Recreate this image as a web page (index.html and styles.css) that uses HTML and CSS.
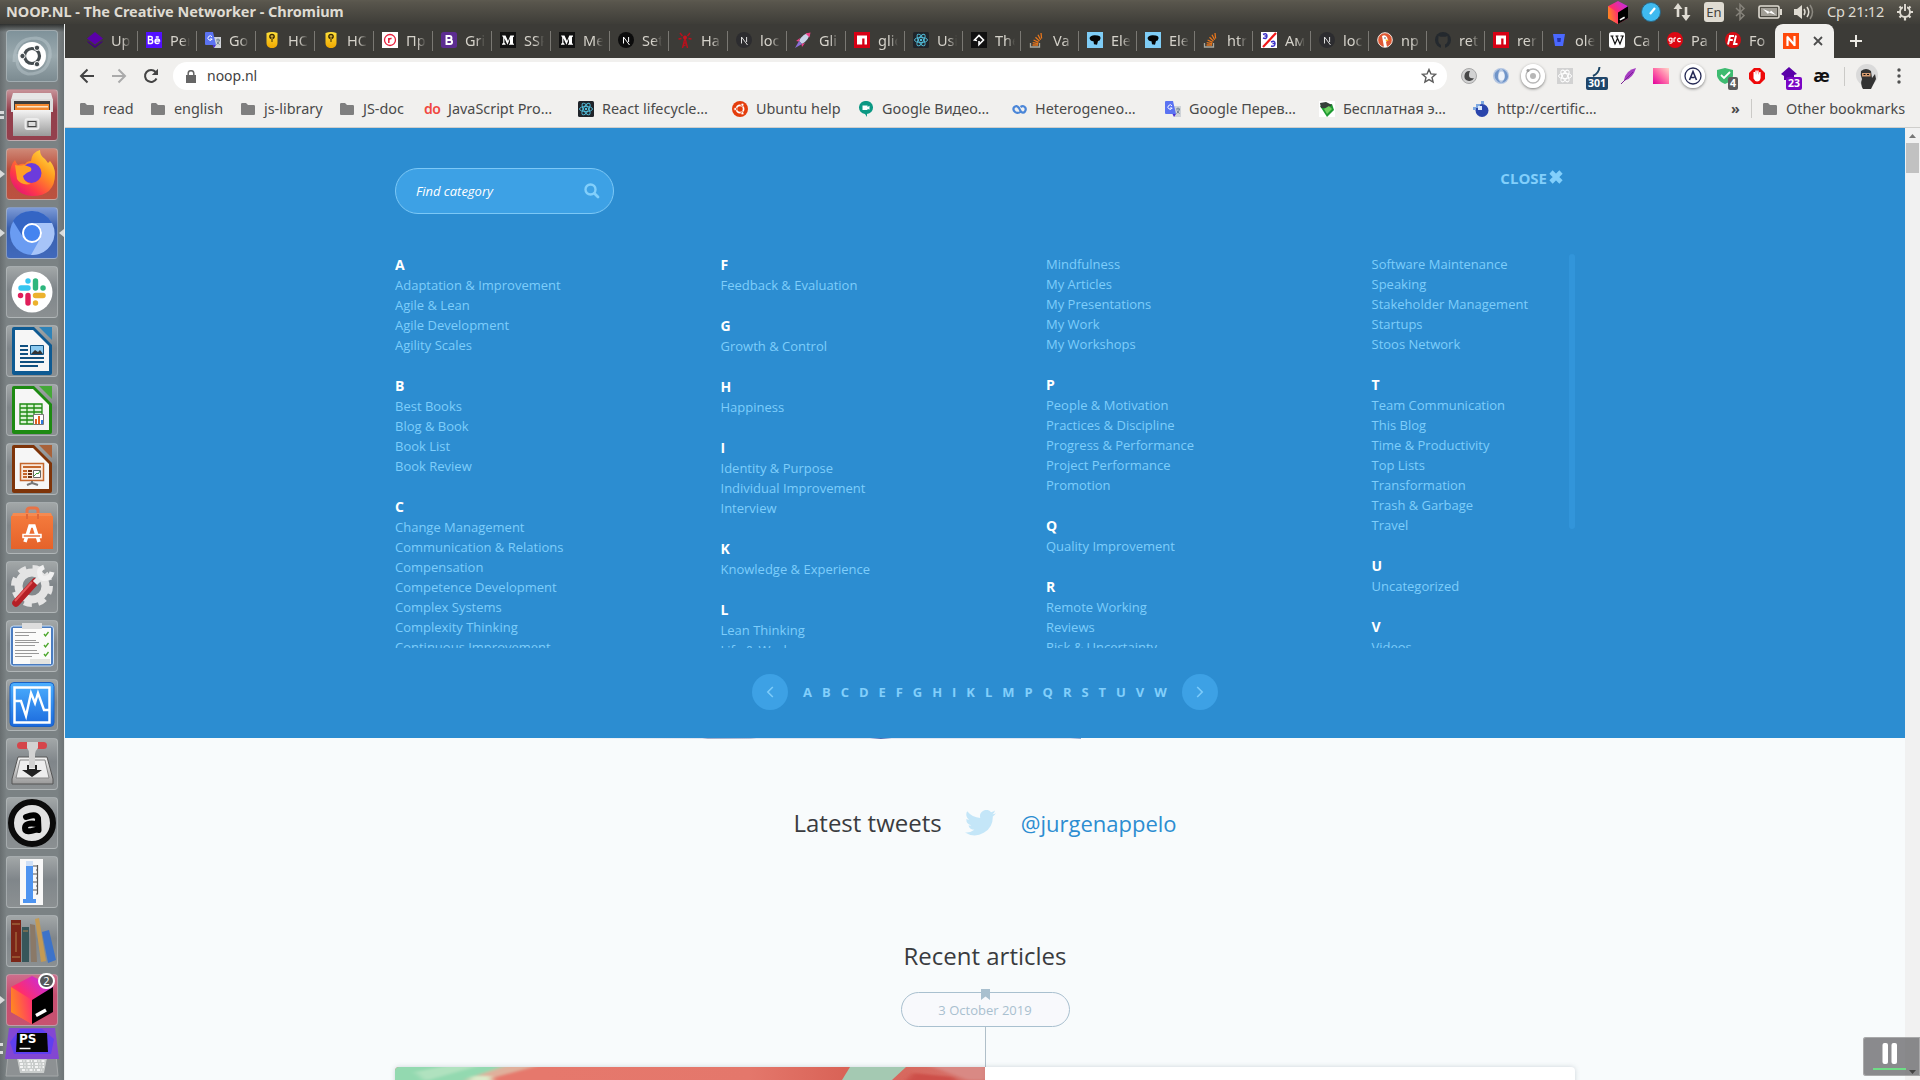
FILE: index.html
```html
<!DOCTYPE html>
<html lang="en">
<head>
<meta charset="utf-8">
<title>NOOP.NL - The Creative Networker</title>
<link rel="stylesheet" href="styles.css">
</head>
<body>
<svg class="defs" width="0" height="0" aria-hidden="true">
  <defs>
    <linearGradient id="g-yellow" x2="0" y2="1"><stop stop-color="#ffe13a"/><stop offset="1" stop-color="#f0a800"/></linearGradient>
    <linearGradient id="g-box" x1="0" y1="1" x2="1" y2="0"><stop stop-color="#ff9419"/><stop offset=".45" stop-color="#ff2d6c"/><stop offset="1" stop-color="#b52cff"/></linearGradient>
    <linearGradient id="g-boxl" x1="0" y1=".6" x2="1" y2=".3"><stop stop-color="#ff8a1e"/><stop offset="1" stop-color="#ff2f70"/></linearGradient>
    <linearGradient id="g-fox" x1="1" y1="0" x2="0.2" y2="1"><stop stop-color="#fff14f"/><stop offset=".4" stop-color="#ff9a1f"/><stop offset=".75" stop-color="#ff3b47"/><stop offset="1" stop-color="#e3107a"/></linearGradient>
    <linearGradient id="g-steel" x2="0" y2="1"><stop stop-color="#f4f4f4"/><stop offset="1" stop-color="#9a9a9a"/></linearGradient>
    <linearGradient id="g-bag" x2="0" y2="1"><stop stop-color="#f47a3c"/><stop offset="1" stop-color="#e5622a"/></linearGradient>
    <linearGradient id="g-mon" x2="0" y2="1"><stop stop-color="#4cb0ff"/><stop offset="1" stop-color="#1a68dc"/></linearGradient>
    <linearGradient id="g-pink" x1="1" y1="0" x2="0" y2="1"><stop stop-color="#ffd5c8"/><stop offset=".5" stop-color="#ff6aa6"/><stop offset="1" stop-color="#e2009c"/></linearGradient>
    <linearGradient id="g-photo"><stop offset=".25" stop-color="#e6786c"/><stop offset=".6" stop-color="#e4776b"/><stop offset=".76" stop-color="#d96357"/><stop offset="1" stop-color="#d4716a"/></linearGradient>
    <filter id="soft" x="-5%" y="-40%" width="110%" height="180%"><feGaussianBlur stdDeviation="3 1"/></filter>
  </defs>
  <symbol id="folder" viewBox="0 0 16 16"><path fill="#7f7f7f" d="M1 3.200Q1 2 2.200 2H6l2 2h5.800q1.200 0 1.200 1.200V13q0 1-1 1H2q-1 0-1-1z"/></symbol>
  <symbol id="gem" viewBox="0 0 16 16"><path fill="#5a00a8" d="M8 0l8 6.500-8 6-8-6z"/><path fill="#430080" d="M0 8.500l8 5.500 8-5.500-1 2-7 5.500-7-5.500z"/></symbol>
  <symbol id="be" viewBox="0 0 16 16"><path fill="#5310ff" d="M0 0h16v16H0z"/><path fill="none" stroke="#fff" stroke-width="1.500" d="M2.500 4.500h2.300q1.500 0 1.500 1.600T4.800 7.700H2.500zm0 3.200H5q1.700 0 1.700 1.900T5 11.500H2.500zM9 9h4.500q0-2-2.200-2T9 9.200q0 2.300 2.300 2.300 1.500 0 2-1M9.800 5h3"/></symbol>
  <symbol id="translate" viewBox="0 0 16 16"><path fill="#cfd3d8" d="M7 5h9v11H9z"/><path fill="#5b73f2" d="M1 0h7l3 13H1q-1 0-1-1V1q0-1 1-1z"/><path fill="#4a2fd0" d="M7.500 13H11l-2 3z"/><path fill="none" stroke="#fff" d="M7 4.800A2.200 2.200 0 1 0 7.200 7H5"/><path fill="none" stroke="#6d8292" d="M11 8h4m-2-1.500V8m1.500 0q-.5 3-3 4.500m.5-3q.8 2 2.500 3"/></symbol>
  <symbol id="shieldy" viewBox="0 0 16 16"><path fill="url(#g-yellow)" d="M2.500 1q5.500-2 11 0v10q0 4-4 5h-3q-4-1-4-5z"/><circle cx="8" cy="4.500" r="2.800" fill="#3a2b00"/><path stroke="#e8c040" d="M8 3v4M6.500 4.200h3"/><path stroke="#3a2b00" d="M8 7v3"/></symbol>
  <symbol id="rr" viewBox="0 0 16 16"><path fill="#fff" d="M0 0h16v16H0z"/><circle cx="8" cy="8" r="5.500" fill="none" stroke="#e8203c" stroke-width="1.300"/><path fill="none" stroke="#e8203c" stroke-width="1.500" d="M6.800 11V6m0 2q.5-1.800 2.800-1.500"/></symbol>
  <symbol id="boot" viewBox="0 0 16 16"><rect width="16" height="16" rx="2.500" fill="#5d2d91"/><path fill="none" stroke="#fff" stroke-width="1.900" d="M5.500 4h3q2 0 2 2t-2 2h-3zm0 4H9q2.100 0 2.100 2T9 12H5.500z"/></symbol>
  <symbol id="medium" viewBox="0 0 16 16"><path fill="#111" d="M0 0h16v16H0z"/><path fill="#fff" d="M2 3.500h3.500L8 9l2.300-5.500H14v1l-1 .7v6l1 .8v.7H9v-.7l1-.8V6.500L7.500 12.700 4.400 6.300v4.500l1.200 1.300v.6H2v-.6l1.200-1.300V5.500z"/></symbol>
  <symbol id="next" viewBox="0 0 16 16"><circle cx="8" cy="8" r="8" fill="#0c0c0c"/><path fill="none" stroke="#fff" d="M5.500 11.500V5l6 8M10.600 5v5"/></symbol>
  <symbol id="nextdim" viewBox="0 0 16 16"><circle cx="8" cy="8" r="8" fill="#2c2c2f"/><path fill="none" stroke="#ddd" d="M5.500 11.500V5l6 8M10.600 5v5"/></symbol>
  <symbol id="tower" viewBox="0 0 16 16"><path fill="none" stroke="#b8101c" stroke-width="1.400" d="M8 6L5.500 16M8 6l2.500 10M6.800 11h2.500M6.500 14l3.500-2M5.500 4L3 1M4.500 6.500l-3 .5m9-3L13 1m-1.500 5.500l3 .5"/><circle cx="8" cy="5.500" r="2" fill="#c5121e"/></symbol>
  <symbol id="rocket" viewBox="0 0 16 16"><path fill="#c9d3e8" d="M15 1q-7 0-11 8l3 3q7-4 8-11z"/><path fill="#ee3f86" d="M15.500.5l-5 1 4 4zM5 6L1 9l3 .5zM10 11l-3 4-.5-3z"/><path fill="#8a6fd8" d="M4 9L0 16l7-4z"/></symbol>
  <symbol id="npm" viewBox="0 0 16 16"><path fill="#d60014" d="M0 0h16v16H0z"/><path fill="#fff" d="M3 3.500h10v9h-2.500v-6h-2.300v6H3z"/></symbol>
  <symbol id="react" viewBox="0 0 16 16"><rect width="16" height="16" rx="1.500" fill="#20242a"/><g fill="none" stroke="#53c1de" stroke-width=".9"><ellipse cx="8" cy="8" rx="6.500" ry="2.600"/><ellipse cx="8" cy="8" rx="6.500" ry="2.600" transform="rotate(60 8 8)"/><ellipse cx="8" cy="8" rx="6.500" ry="2.600" transform="rotate(120 8 8)"/></g><circle cx="8" cy="8" r="1.200" fill="#53c1de"/></symbol>
  <symbol id="diam" viewBox="0 0 16 16"><path fill="#111" d="M0 0h16v16H0z"/><path fill="none" stroke="#fff" stroke-width="1.600" d="M6 8.500L3.500 8 8 3.500 12.500 8 8 12.500V9"/></symbol>
  <symbol id="so" viewBox="0 0 16 16"><path fill="none" stroke="#a9a9a0" stroke-width="1.300" d="M1.500 11v4h9v-4"/><path stroke="#e8761c" stroke-width="1.300" d="M3.500 13h5.500M3.700 10.700l5.500.9M4.600 8l5 2.300M6.500 5.200l4 3.900M9 2.700l2.600 5M12 1l.6 5.500"/></symbol>
  <symbol id="ele" viewBox="0 0 16 16"><path fill="#7fcdf6" d="M0 0h16v16H0z"/><path fill="#050505" d="M2.500 6Q4 3 8 3.300q6 0 5.500 3.200Q13 9 11 9l-1 3.800-3-.6-.5-3q-3 .3-4-3.200z"/></symbol>
  <symbol id="ee" viewBox="0 0 16 16"><path fill="#fff" d="M0 0h16v16H0z"/><path fill="none" stroke="#3b2fc6" stroke-width="1.400" d="M2 2.500q4-2 4 1.500T2 6m1.500-2H6m4 6q4-2 4 1.500T10 14m1.500-2.500H14"/><path stroke="#f01818" stroke-width="2.200" d="M15 1L2 15"/></symbol>
  <symbol id="duck" viewBox="0 0 16 16"><circle cx="8" cy="8" r="7.300" fill="#de5833" stroke="#f5e6df"/><path fill="#fff" d="M5 4q3-2 5 1l1 3-2 2 1 5H7z"/><path fill="#f8b91b" d="M8.500 7.500l4 .4-3.500 1.600z"/><circle cx="8" cy="6" r=".7" fill="#234"/></symbol>
  <symbol id="git" viewBox="0 0 16 16"><circle cx="8" cy="8" r="8" fill="#24292e"/><path fill="#3c3b37" d="M6 16v-3Q3 11 3.300 7.500L3.500 4l2 .7h5l2-.7.200 3.500Q13 11 10 12.500V16z"/></symbol>
  <symbol id="bucket" viewBox="0 0 16 16"><path fill="#4a68ff" d="M2 2h12l-2 12H4z"/><path fill="#2332a8" d="M6 6h4l-.5 4h-3z"/></symbol>
  <symbol id="wiki" viewBox="0 0 16 16"><rect width="16" height="16" rx="2.500" fill="#fff"/><path fill="none" stroke="#111" stroke-width="1.200" d="M1.500 4h3M2.800 4L6 12l2.500-5.500M6.500 4h3M7.500 4l3.500 8L14 4M11.500 4h3.300"/></symbol>
  <symbol id="grc" viewBox="0 0 16 16"><circle cx="8" cy="8" r="8" fill="#dd0712"/><path fill="none" stroke="#fff" stroke-width="1.200" d="M5 6.300q-3-.8-3 1.500t3 1V6v4.500q-.5 1-2.500.6M7 10V6.500q.5-.8 2-.5m4.700.6q-3-.9-3 1.400t3 1.400"/></symbol>
  <symbol id="fl" viewBox="0 0 16 16"><circle cx="8" cy="8" r="8" fill="#d40a12"/><path fill="none" stroke="#fff" stroke-width="1.900" d="M3 12.500L5 4h4M4.300 8h3.500M11 3.500l-2 8.500h3.500"/></symbol>
  <symbol id="nn" viewBox="0 0 16 16"><path fill="#ff4a0c" d="M0 0h16v16H0z"/><path fill="none" stroke="#fff" stroke-width="2.200" d="M4.500 13V3.500M4 3.500l8 9M11.500 13V3"/></symbol>
  <symbol id="ubuntu" viewBox="0 0 16 16"><circle cx="8" cy="8" r="8" fill="#e43d0c"/><circle cx="8" cy="8" r="3.600" fill="none" stroke="#fff" stroke-width="1.700"/><g fill="#fff" stroke="#e43d0c" stroke-width=".7"><circle cx="3.200" cy="8" r="1.500"/><circle cx="10.400" cy="3.800" r="1.500"/><circle cx="10.400" cy="12.200" r="1.500"/></g></symbol>
  <symbol id="hang" viewBox="0 0 16 16"><path fill="#0b9883" d="M8 0a6.500 6.500 0 0 1 1 13v3l-2-3A6.500 6.500 0 0 1 8 0z"/><path fill="#fff" d="M4.500 4.500h5V6l2-1.200v4L9.500 7.700V9h-5z"/></symbol>
  <symbol id="inf" viewBox="0 0 16 16"><path fill="none" stroke="#4b86d8" stroke-width="2.200" d="M10 10.500Q7 13 4.300 11.200q-3-2.200-1.200-5Q5.500 3.500 8 7l1.500 3q2.500 3 4.500.5 1.800-3-.7-4.900Q11.500 4.500 9.500 6"/></symbol>
  <symbol id="greenb" viewBox="0 0 16 16"><path fill="#fff" d="M0 0h16v16H0z"/><path fill="#1e9a32" d="M1 5l7 11 7-7-2-6z"/><path fill="#36403a" d="M1 2l6-1 6 3-4 3-7 0z"/><path fill="#6ed060" d="M5 8l5-3 3 3-5 5z"/></symbol>
  <symbol id="cert" viewBox="0 0 16 16"><circle cx="9" cy="9.500" r="6.500" fill="#2a45ac"/><path fill="#7da7e0" d="M3 3h4v4H3zM8 0h3v3H8zM0 6h3v3H0z"/><path fill="#dbe8fa" d="M5 5h4v4H5z"/></symbol>
  <symbol id="box" viewBox="0 0 42 48"><path fill="url(#g-box)" d="M21 0l21 11v25L21 48 0 36V11z"/><path fill="url(#g-boxl)" d="M0 11l21 13v24L0 36z"/><path fill="#000" d="M21 24l21-13v25L21 48z"/><path stroke="#fff" stroke-width="3.500" d="M25 39.500l10-5.500"/></symbol>
</svg>

<header class="panel">
  <span class="panel-title">NOOP.NL - The Creative Networker - Chromium</span>
  <div class="indicators">
    <svg class="ind i-box" width="20" height="23"><use href="#box"/></svg>
    <svg class="ind i-clock" width="22" height="22" viewBox="0 0 22 22"><circle cx="11" cy="11" r="9.500" fill="#3fbaf0" stroke="#2b6480"/><path stroke="#fff" stroke-width="2.200" d="M10 13l5-6"/></svg>
    <svg class="ind i-net" width="20" height="18" viewBox="0 0 20 18"><path fill="none" stroke="#dfdbd2" stroke-width="2.600" d="M6 14V4M14 4v10"/><path fill="#dfdbd2" d="M1.500 6L6 0l4.500 6zM9.500 12h9L14 18z"/></svg>
    <span class="ind lang">En</span>
    <svg class="ind i-bt" width="12" height="18" viewBox="0 0 12 18"><path fill="none" stroke="#86837b" stroke-width="1.500" d="M2 5l8 7.500L6 16.500v-15L10 5.500 2 13"/></svg>
    <svg class="ind i-bat" width="24" height="14" viewBox="0 0 24 14"><rect x="1" y="1" width="20" height="12" rx="1.500" fill="none" stroke="#dfdbd2" stroke-width="1.600"/><path fill="#a19e96" d="M3 3h16v8H3z"/><path fill="#fff" d="M5 4l7 3 1-1.500L18 10l-7-2.500L10 9z"/><path stroke="#dfdbd2" stroke-width="2" d="M23 4v6"/></svg>
    <svg class="ind i-vol" width="22" height="18" viewBox="0 0 22 18"><path fill="#dfdbd2" d="M1 6h3l5-4v14l-5-4H1z"/><path fill="none" stroke="#dfdbd2" stroke-width="1.500" d="M11 6q2 3 0 6M14 4q3.500 5 0 10"/><path fill="none" stroke="#8c8981" stroke-width="1.500" d="M17 2q5 7 0 14"/></svg>
    <span class="clock">Ср 21:12</span>
    <svg class="ind i-gear" width="18" height="18" viewBox="0 0 18 18"><circle cx="9" cy="9" r="5" fill="none" stroke="#dfdbd2" stroke-width="1.900"/><g stroke="#dfdbd2" stroke-width="2.200"><path d="M9 14v3.500M1 9h3M14 9h3M3.500 14.500l2-2M14.500 14.500l-2-2M3.500 3.500l2 2M14.500 3.500l-2 2"/></g><path stroke="#4a4843" stroke-width="4" d="M9 1v7"/><path stroke="#dfdbd2" stroke-width="1.900" d="M9 1v7"/></svg>
  </div>
</header>

<div class="desktop">
<nav class="dock">
  <div class="tile dash"><svg viewBox="0 0 52 52"><path fill="none" stroke="#c6d2d6" stroke-opacity=".4" stroke-width="3" d="M8 32Q8 8 30 8q16 2 14 20M44 22q0 22-22 22Q8 40 12 24"/><circle cx="26" cy="26" r="14" fill="#fff"/><circle cx="26" cy="26" r="7.500" fill="none" stroke="#454c50" stroke-width="3.200"/><g fill="#454c50" stroke="#fff"><circle cx="16.500" cy="26" r="2.700"/><circle cx="31" cy="17.800" r="2.700"/><circle cx="31" cy="34.200" r="2.700"/></g></svg></div>
  <div class="tile red"><i class="pip double"></i><svg viewBox="0 0 52 52"><path fill="#e6e6e6" d="M7 4h38l2 7H5z"/><path fill="#dcdcdc" d="M5 10h42v13H5z"/><path fill="#3d3d3d" d="M8 12h36v10H8z"/><path fill="#f2882f" d="M9 15h34v6H9z"/><path fill="#fbe3c4" d="M11 17h31v1.500H11z"/><path fill="url(#g-steel)" d="M7 21h38v26H7z"/><rect x="19.500" y="30" width="13" height="10" rx="2" fill="none" stroke="#ececec" stroke-width="2"/><rect x="22" y="32.500" width="8" height="5" fill="#ddd" stroke="#444"/></svg></div>
  <div class="tile fire"><i class="pip"></i><svg viewBox="0 0 52 52"><path fill="url(#g-fox)" d="M26 48A22.500 22.500 0 0 1 5 19q1-4 4-7 1 3 3 5 4-2 7-1 2-3 6-3Q26 4 34 2q0 6 5 9l3 4 2-2q5 6 5 13 0 22-23 22z"/><circle cx="25.500" cy="25" r="10" fill="#6c3bdc"/><path fill="#ffa024" d="M9 17q5 1 9 0l6 2q2 1 1 4-4 1-8 5 1 6 8 8-10 2-14-5z"/></svg></div>
  <div class="tile blue"><i class="pip"></i><i class="pip right"></i><svg viewBox="0 0 52 52"><circle cx="26" cy="26" r="22" fill="#6a9cf2"/><path fill="#3465c4" d="M26 4a22 22 0 0 1 20 12H26a10 10 0 0 0-9 14L7 14A22 22 0 0 1 26 4z"/><path fill="#a7c4f8" d="M46 16H26a10 10 0 0 1 8 16L25 48A22 22 0 0 0 46 16z"/><circle cx="26" cy="26" r="9" fill="#4484f0" stroke="#fff" stroke-width="2"/></svg></div>
  <div class="tile"><svg viewBox="0 0 52 52"><circle cx="26" cy="26" r="20.500" fill="#fff"/><g stroke-width="5.400" stroke-linecap="round"><path stroke="#36c5f0" d="M15 22h7m0-7v.1"/><path stroke="#2eb67d" d="M29.500 15v7m7.500 0h.1"/><path stroke="#ecb22e" d="M29.500 29.500h7.500m-7.500 7.500v.1"/><path stroke="#e01e5a" d="M22 29.500V37m-7.500-7.500h.1"/></g></svg></div>
  <div class="tile"><svg viewBox="0 0 52 52"><path fill="#0e5a92" d="M8 2h20l18 18v28q0 2-2 2H8q-2 0-2-2V4q0-2 2-2z"/><path fill="#f6f6f6" d="M9 5h18l16 16v25H9z"/><path fill="#2f83b8" d="M33 2h13v13z"/><path stroke="#105080" stroke-width="2" d="M14 21h8M14 25h8M14 29h8M14 33h24M14 37h24M14 41h18"/><path fill="#8ccaf0" stroke="#105080" d="M24.500 20.500h13v9h-13z"/><path fill="#333" d="M25 29l4-4 3 2 2-2 3 4z"/></svg></div>
  <div class="tile"><svg viewBox="0 0 52 52"><path fill="#1d8a12" d="M8 2h20l18 18v28q0 2-2 2H8q-2 0-2-2V4q0-2 2-2z"/><path fill="#f6f6f6" d="M9 5h18l16 16v25H9z"/><path fill="#45a838" d="M33 2h13v13z"/><path fill="#d9f2d2" stroke="#1d8a12" stroke-width="1.300" d="M14 20h22v20H14zM14 24h22M14 28h22M14 32h22M14 36h22M21 20v20M28 20v20"/><path fill="#fff" stroke="#777" d="M27.500 30.500h10v10h-10z"/><path fill="#e06020" d="M29 35h2v5h-2zM32 32h2v8h-2z"/><path fill="#2d7be0" d="M35 36h2v4h-2z"/></svg></div>
  <div class="tile"><svg viewBox="0 0 52 52"><path fill="#7e3409" d="M8 2h20l18 18v28q0 2-2 2H8q-2 0-2-2V4q0-2 2-2z"/><path fill="#f6f6f6" d="M9 5h18l16 16v25H9z"/><path fill="#a8623a" d="M33 2h13v13z"/><path fill="#fae9dc" stroke="#c4662c" stroke-width="1.500" d="M14.500 20.500h23v17h-23z"/><path stroke="#c4662c" stroke-width="2" d="M17 24h18M17 28h4M17 31h4M17 34h4"/><path stroke="#6b3010" stroke-width="2" d="M22 28h4M22 31h4M22 34h4"/><path fill="#fff" stroke="#666" d="M27.500 27.500h7v7h-7z"/><path fill="none" stroke="#3a9a3a" d="M28 33l3-3 1 1 2-3"/><path fill="none" stroke="#777" stroke-width="2" d="M26 38v2l-5 2m5-2l6 2"/></svg></div>
  <div class="tile"><svg viewBox="0 0 52 52"><path fill="none" stroke="#e87346" stroke-width="3" d="M21 18V9q0-3 3-3h5q3 0 3 3v9"/><path fill="#f58a50" d="M7 11h38l2 5H5z"/><path fill="url(#g-bag)" d="M5 14h42v33H5z"/><path fill="none" stroke="#fff" stroke-width="3.500" d="M19 40l5-16h4l5 16"/><path fill="#e8703c" stroke="#fff" stroke-width="1.500" d="M17 32.500h18v3H17z"/><path fill="none" stroke="#e06838" stroke-width="2" d="M21 17v-5M32 17v-5"/></svg></div>
  <div class="tile"><svg viewBox="0 0 52 52"><circle cx="26" cy="25" r="13.500" fill="none" stroke="#e4e4e4" stroke-width="8"/><circle cx="26" cy="25" r="18.500" fill="none" stroke="#e4e4e4" stroke-width="5" stroke-dasharray="8 6.530"/><path stroke="#b52026" stroke-width="7.500" stroke-linecap="round" d="M10 42l19-21"/><path stroke="#e2585a" stroke-width="2" d="M9 40l17-19"/><path stroke="#e8e8e8" stroke-width="6" d="M29 22l7-7"/><path fill="none" stroke="#f0f0f0" stroke-width="5" d="M38 6q-6 2-4 8t9 2q2-1 3-5"/></svg></div>
  <div class="tile"><svg viewBox="0 0 52 52"><rect x="4.500" y="6" width="43" height="40" rx="3" fill="#4a7cc0" stroke="#c4dcf6"/><path fill="#fbfbfa" d="M7 8h38v36H7z"/><path fill="#ddd" d="M16 3h20v6H16z"/><path stroke="#999" d="M9 12.500h21M9 15.500h14M9 20.500h21M9 22.500h24M9 25.500h20M9 30.500h22M9 33.500h24M9 36.500h17"/><path fill="none" stroke="#4aa62a" stroke-width="1.300" d="M38 14l1.500 2 3-4M38 25l1.500 2 3-4M38 34l1.500 2 3-4"/><path fill="#e3e3e0" d="M24 39h20v5H24z"/></svg></div>
  <div class="tile"><svg viewBox="0 0 52 52"><rect x="4" y="3.500" width="44" height="44" rx="4" fill="url(#g-mon)" stroke="#1b60c2"/><path fill="none" stroke="#fff" stroke-width="2.500" d="M8.500 8.500h35v35h-35z"/><path fill="none" stroke="#fff" stroke-width="2.400" d="M9 22h6l5 15 5-23 4 10 3-10 6 17h5"/></svg></div>
  <div class="tile"><svg viewBox="0 0 52 52"><path fill="url(#g-steel)" stroke="#555" d="M12 19h29l6 22v5H6v-5z"/><path fill="#eee" stroke="#888" d="M14 22h25l4 18H10z"/><rect x="11" y="4" width="30" height="7" rx="3.500" fill="#d5454a"/><path fill="#d2d2d2" d="M21 4h11v6q-3 3-3 6v14h-6V16q0-4-2-6z"/><path fill="#222" d="M21 27h2v4h6v-4h2v5h5L26 39l-10-7h5z"/></svg></div>
  <div class="tile"><svg viewBox="0 0 52 52"><circle cx="26" cy="26" r="21" fill="#e2e2e2" stroke="#0b0b0b" stroke-width="6"/><path fill="none" stroke="#000" stroke-width="6" stroke-linecap="round" stroke-linejoin="round" d="M20 20q10-4 12 1l.5 12M31 27q-12-2-12 4t13 1"/></svg></div>
  <div class="tile"><svg viewBox="0 0 52 52"><path fill="#f8f8f8" d="M14 3h23v46H14z"/><path stroke="#555" stroke-width="1.200" d="M27 10h5M30 14h2M27 18h5M30 22h2M27 26h5M30 30h2M27 34h5M30 38h2M31.500 9v29"/><path fill="#cfe0f6" d="M20 5h7v6h-7z"/><path fill="#4e94f0" d="M20 10h7v33h3v4H17v-4h3z"/></svg></div>
  <div class="tile"><svg viewBox="0 0 52 52"><path fill="#7b2517" d="M5 5h10v42H5z"/><path fill="#37565a" d="M16 12h7v35h-7z"/><path fill="#8a7968" d="M24 9l5 1 2 37h-6z"/><path fill="#c39a54" d="M29 4l4-1 7 43-5 1z"/><path fill="#3d73c8" d="M36 17l7-2 7 30-8 3z"/><path stroke="#b1804a" d="M6 9h8M6 42h8M10 17v20M17 16h5"/></svg></div>
  <div class="tile pink"><i class="pip"></i><svg viewBox="0 0 52 52"><use href="#box" x="5" y="2" width="42" height="48"/></svg><span class="count">2</span></div>
  <div class="folded"><i class="pip triple"></i><svg width="54" height="50" viewBox="0 0 54 50"><path fill="#8d9193" stroke="#a5a8a9" d="M3 28h48l2 20H1z"/><path fill="#c9cccb" d="M12 30h30l-3 15H15z"/><path fill="none" stroke="#f2f2f2" stroke-width="2" stroke-dasharray="3 1.500 1 2" d="M14 33h26M15 36h24M15 39h24M17 42h20"/><path fill="#8347d2" d="M4 0h46l4 31H0z"/><path fill="#5f3ff0" d="M15 1h22l12 10-3 15H9L5 14z"/><path fill="#050505" d="M12 5h30l1 19H11z"/><path stroke="#fff" stroke-width="1.500" d="M14.500 20.500h11"/></svg><b>PS</b></div>
</nav>

<main class="browser">
  <div class="tabs">
    <div class="tab"><svg><use href="#gem"/></svg><span>Up</span></div>
    <div class="tab"><svg><use href="#be"/></svg><span>Per</span></div>
    <div class="tab"><svg><use href="#translate"/></svg><span>Go</span></div>
    <div class="tab"><svg><use href="#shieldy"/></svg><span>НС</span></div>
    <div class="tab"><svg><use href="#shieldy"/></svg><span>НС</span></div>
    <div class="tab"><svg><use href="#rr"/></svg><span>Пр</span></div>
    <div class="tab"><svg><use href="#boot"/></svg><span>Gri</span></div>
    <div class="tab"><svg><use href="#medium"/></svg><span>SSR</span></div>
    <div class="tab"><svg><use href="#medium"/></svg><span>Me</span></div>
    <div class="tab"><svg><use href="#next"/></svg><span>Set</span></div>
    <div class="tab"><svg><use href="#tower"/></svg><span>Ha</span></div>
    <div class="tab"><svg><use href="#nextdim"/></svg><span>loc</span></div>
    <div class="tab"><svg><use href="#rocket"/></svg><span>Gli</span></div>
    <div class="tab"><svg><use href="#npm"/></svg><span>glic</span></div>
    <div class="tab slim"><svg><use href="#react"/></svg><span>Usi</span></div>
    <div class="tab slim"><svg><use href="#diam"/></svg><span>The</span></div>
    <div class="tab slim"><svg><use href="#so"/></svg><span>Va</span></div>
    <div class="tab slim"><svg><use href="#ele"/></svg><span>Ele</span></div>
    <div class="tab slim"><svg><use href="#ele"/></svg><span>Ele</span></div>
    <div class="tab slim"><svg><use href="#so"/></svg><span>htr</span></div>
    <div class="tab slim"><svg><use href="#ee"/></svg><span>Ам</span></div>
    <div class="tab slim"><svg><use href="#nextdim"/></svg><span>loc</span></div>
    <div class="tab slim"><svg><use href="#duck"/></svg><span>np</span></div>
    <div class="tab slim"><svg><use href="#git"/></svg><span>ret</span></div>
    <div class="tab slim"><svg><use href="#npm"/></svg><span>rer</span></div>
    <div class="tab slim"><svg><use href="#bucket"/></svg><span>ole</span></div>
    <div class="tab slim"><svg><use href="#wiki"/></svg><span>Ca</span></div>
    <div class="tab slim"><svg><use href="#grc"/></svg><span>Pa</span></div>
    <div class="tab slim last"><svg><use href="#fl"/></svg><span>Fo</span></div>
    <div class="tab-active"><svg width="16" height="16"><use href="#nn"/></svg><svg width="10" height="10" viewBox="0 0 10 10"><path stroke="#4c4c4c" stroke-width="1.800" d="M1 1l8 8M9 1L1 9"/></svg></div>
    <svg class="newtab" width="14" height="14" viewBox="0 0 14 14"><path stroke="#eceae4" stroke-width="2" d="M7 1v12M1 7h12"/></svg>
  </div>

  <div class="toolbar">
    <div class="nav">
      <svg width="16" height="16" viewBox="0 0 16 16"><path fill="none" stroke="#444" stroke-width="2" d="M15 8H2.500M8.500 1.500L2 8l6.500 6.500"/></svg>
      <svg width="16" height="16" viewBox="0 0 16 16"><path fill="none" stroke="#aaa" stroke-width="2" d="M1 8h12.500M7.500 1.500L14 8l-6.500 6.500"/></svg>
      <svg width="16" height="16" viewBox="0 0 16 16"><path fill="none" stroke="#444" stroke-width="2" d="M13.500 10.500A6 6 0 1 1 12.600 4"/><path fill="#444" d="M15 .8V7H8.800z"/></svg>
    </div>
    <div class="omnibox">
      <svg width="10" height="13" viewBox="0 0 10 13"><path fill="#666" d="M0 5h10v8H0z"/><path fill="none" stroke="#666" stroke-width="1.500" d="M2.200 5V3.500a2.800 2.800 0 0 1 5.600 0V5"/></svg>
      <span>noop.nl</span>
      <svg class="star" width="16" height="16" viewBox="0 0 16 16"><path fill="none" stroke="#5c5c5c" stroke-width="1.400" d="M8 1.500l1.900 4.400 4.700.4-3.600 3.100 1.100 4.700L8 11.600l-4.100 2.500L5 9.400 1.400 6.300l4.700-.4z"/></svg>
    </div>
    <div class="exts">
      <div class="ext"><svg viewBox="0 0 16 16"><circle cx="8" cy="8" r="7.500" fill="#d2d2d2" stroke="#a8a8a8"/><path fill="#474747" d="M9 3a5 5 0 1 0 4 7q-5 1-5-3 0-2 1-4z"/></svg></div>
      <div class="ext"><svg viewBox="0 0 16 16"><circle cx="8" cy="8" r="8" fill="#b4c6e2"/><path fill="#6f94c8" d="M7 1q-7 3-5 9 2 4 6 5-4-4-3-7 0-4 2-7zM9 1q3 3 3 7 0 4-4 7 6-1 7-6 0-6-6-8z"/><ellipse cx="8.500" cy="8" rx="3" ry="4.500" fill="#eef3fa"/></svg></div>
      <div class="ext"><svg class="disc" viewBox="0 0 24 24"><circle cx="12" cy="12" r="12" fill="#fff"/><circle cx="12" cy="12" r="7" fill="none" stroke="#b7b7b7" stroke-width="1.300"/><circle cx="12" cy="12" r="3" fill="#b7b7b7"/><circle cx="7" cy="6.500" r="1.500" fill="#999"/></svg></div>
      <div class="ext"><svg viewBox="0 0 16 16"><path fill="#d2d2d2" d="M0 0h16v16H0z"/><g fill="none" stroke="#fff"><ellipse cx="8" cy="8" rx="6.500" ry="2.600"/><ellipse cx="8" cy="8" rx="6.500" ry="2.600" transform="rotate(60 8 8)"/><ellipse cx="8" cy="8" rx="6.500" ry="2.600" transform="rotate(120 8 8)"/></g></svg></div>
      <div class="ext"><svg viewBox="0 0 16 16"><path fill="none" stroke="#1c4565" stroke-width="2" d="M10.500 -1Q10 5 4 8"/></svg><b class="badge navy">301</b></div>
      <div class="ext"><svg viewBox="0 0 16 16"><path fill="#a63cc2" d="M15 0Q5 2 3 12l1 .5Q12 10 15 0z"/><path stroke="#7b2296" d="M0 16L12 4"/></svg></div>
      <div class="ext"><svg viewBox="0 0 16 16"><path fill="url(#g-pink)" d="M0 0h16v16H0z"/></svg></div>
      <div class="ext"><svg class="disc" viewBox="0 0 24 24"><circle cx="12" cy="12" r="12" fill="#fff"/><circle cx="12" cy="12" r="8" fill="none" stroke="#252a55" stroke-width="1.300"/><path fill="none" stroke="#252a55" stroke-width="1.600" d="M8.500 16L12 7.500l3.500 8.500M10 13.500h3.500"/></svg></div>
      <div class="ext"><svg viewBox="0 0 16 16"><path fill="#3dbb70" d="M8 0l8 2v6q-1 5-8 8-7-3-8-8V2z"/><path fill="none" stroke="#fff" stroke-width="1.800" d="M4 7l3 3 6-6"/></svg><b class="badge grey">4</b></div>
      <div class="ext"><svg viewBox="0 0 16 16"><path fill="#ee0909" d="M5 0h6l5 5v6l-5 5H5l-5-5V5z"/><path fill="#fff" d="M4.500 8V4H6v3l.4-4.500h1.400V7l.5-4.500h1.300L9.700 7l.6-3h1.300v6q-.6 3.500-3.600 3.500-2 0-3.500-3z"/></svg></div>
      <div class="ext"><svg viewBox="0 0 16 16"><path fill="#5a00a8" d="M8-1l8 7-3 1v5H3V8L0 6z"/></svg><b class="badge violet">23</b></div>
      <div class="ext"><b class="ae">æ</b></div>
    </div>
    <i class="rule"></i>
    <svg class="avatar" width="22" height="26" viewBox="0 -2 22 26"><circle cx="11" cy="10" r="11" fill="#dadada"/><path fill="#333" d="M5 6q5-4 10 0l1 7 3-4 1 5-3 6-2 4H7q-3-5-1-10-2-4-1-8z"/><path fill="#d59b70" d="M6 8h8.500v3.500H6z"/><path stroke="#111" d="M7.500 9.500h2M11 9.500h2"/></svg>
    <svg class="menu" width="4" height="16" viewBox="0 0 4 16"><g fill="#505050"><circle cx="2" cy="2" r="1.700"/><circle cx="2" cy="8" r="1.700"/><circle cx="2" cy="14" r="1.700"/></g></svg>
  </div>

  <div class="bookmarks">
    <a style="width:71px"><svg><use href="#folder"/></svg>read</a>
    <a style="width:90px"><svg><use href="#folder"/></svg>english</a>
    <a style="width:99px"><svg><use href="#folder"/></svg>js-library</a>
    <a style="width:85px"><svg><use href="#folder"/></svg>JS-doc</a>
    <a style="width:154px"><b class="do">do</b>JavaScript Pro…</a>
    <a style="width:154px"><svg><use href="#react"/></svg>React lifecycle…</a>
    <a style="width:126px"><svg><use href="#ubuntu"/></svg>Ubuntu help</a>
    <a style="width:153px"><svg><use href="#hang"/></svg>Google Видео…</a>
    <a style="width:154px"><svg><use href="#inf"/></svg>Heterogeneo…</a>
    <a style="width:154px"><svg><use href="#translate"/></svg>Google Перев…</a>
    <a style="width:154px"><svg><use href="#greenb"/></svg>Бесплатная э…</a>
    <a style="width:154px"><svg><use href="#cert"/></svg>http://certific…</a>
    <span class="more">»</span>
    <i class="rule"></i>
    <a class="other"><svg><use href="#folder"/></svg>Other bookmarks</a>
  </div>

  <div class="viewport">
    <div class="page">
      <section class="cats">
        <div class="cats-top">
          <div class="find"><em>Find category</em><svg width="16" height="16" viewBox="0 0 16 16"><circle cx="6.500" cy="6.500" r="5" fill="none" stroke="#82cffb" stroke-width="2.400"/><path stroke="#82cffb" stroke-width="2.800" stroke-linecap="round" d="M10.500 10.500l3.500 3.500"/></svg></div>
          <div class="close"><b>CLOSE</b><svg width="14" height="14" viewBox="0 0 14 14"><path stroke="#82cffb" stroke-width="4.600" d="M2 2l10 10M12 2L2 12"/></svg></div>
        </div>
        <div class="cats-list">
          <div class="col">
            <h3>A</h3><p>Adaptation &amp; Improvement</p><p>Agile &amp; Lean</p><p>Agile Development</p><p>Agility Scales</p>
            <h3>B</h3><p>Best Books</p><p>Blog &amp; Book</p><p>Book List</p><p>Book Review</p>
            <h3>C</h3><p>Change Management</p><p>Communication &amp; Relations</p><p>Compensation</p><p>Competence Development</p><p>Complex Systems</p><p>Complexity Thinking</p><p>Continuous Improvement</p>
          </div>
          <div class="col">
            <h3>F</h3><p>Feedback &amp; Evaluation</p>
            <h3>G</h3><p>Growth &amp; Control</p>
            <h3>H</h3><p>Happiness</p>
            <h3>I</h3><p>Identity &amp; Purpose</p><p>Individual Improvement</p><p>Interview</p>
            <h3>K</h3><p>Knowledge &amp; Experience</p>
            <h3>L</h3><p>Lean Thinking</p><p>Life &amp; Work</p>
          </div>
          <div class="col">
            <p>Mindfulness</p><p>My Articles</p><p>My Presentations</p><p>My Work</p><p>My Workshops</p>
            <h3>P</h3><p>People &amp; Motivation</p><p>Practices &amp; Discipline</p><p>Progress &amp; Performance</p><p>Project Performance</p><p>Promotion</p>
            <h3>Q</h3><p>Quality Improvement</p>
            <h3>R</h3><p>Remote Working</p><p>Reviews</p><p>Risk &amp; Uncertainty</p>
          </div>
          <div class="col">
            <p>Software Maintenance</p><p>Speaking</p><p>Stakeholder Management</p><p>Startups</p><p>Stoos Network</p>
            <h3>T</h3><p>Team Communication</p><p>This Blog</p><p>Time &amp; Productivity</p><p>Top Lists</p><p>Transformation</p><p>Trash &amp; Garbage</p><p>Travel</p>
            <h3>U</h3><p>Uncategorized</p>
            <h3>V</h3><p>Videos</p>
          </div>
          <i class="thumb"></i>
        </div>
        <div class="pager">
          <span class="round"><svg width="8" height="12" viewBox="0 0 8 12"><path fill="none" stroke="#7ccbfa" stroke-width="1.600" d="M6.800 1L1.800 6l5 5"/></svg></span>
          <div class="letters"><b>A</b><b>B</b><b>C</b><b>D</b><b>E</b><b>F</b><b>G</b><b>H</b><b>I</b><b>K</b><b>L</b><b>M</b><b>P</b><b>Q</b><b>R</b><b>S</b><b>T</b><b>U</b><b>V</b><b>W</b></div>
          <span class="round"><svg width="8" height="12" viewBox="0 0 8 12"><path fill="none" stroke="#7ccbfa" stroke-width="1.600" d="M1.200 1l5 5-5 5"/></svg></span>
        </div>
      </section>
      <i class="sliver"></i>
      <section class="tweets">
        <h2>Latest tweets</h2>
        <svg width="31" height="26" viewBox="0 0 24 20"><path fill="#c4e6f8" d="M24 2.400a10 10 0 0 1-2.800.8 5 5 0 0 0 2.100-2.800 10 10 0 0 1-3.100 1.200 4.900 4.900 0 0 0-8.400 4.500A14 14 0 0 1 1.700.9a4.900 4.900 0 0 0 1.500 6.600 5 5 0 0 1-2.200-.6 4.900 4.900 0 0 0 3.900 4.900 5 5 0 0 1-2.200.1 4.900 4.900 0 0 0 4.600 3.400A10 10 0 0 1 0 17.300 14 14 0 0 0 21.500 4.900 10 10 0 0 0 24 2.400z"/></svg>
        <a>@jurgenappelo</a>
      </section>
      <section class="articles">
        <h2>Recent articles</h2>
        <div class="date"><svg width="9" height="11" viewBox="0 0 9 11"><path fill="#a9c0cf" d="M0 0h9v11L4.500 7.500 0 11z"/></svg>3 October 2019</div>
        <i class="stem"></i>
        <article class="card"><svg width="590" height="13" viewBox="0 0 590 13" preserveAspectRatio="none"><path fill="url(#g-photo)" d="M0 0h590v13H0z"/><g filter="url(#soft)"><path fill="#93d9b0" d="M-10-5h140L60 20h-70z"/><path fill="#b0e2bf" d="M20 5L60-3h30L30 14z"/><path fill="#e0b09c" d="M118-4h35L90 13H70z"/><path fill="#dceac9" d="M78 9h18l4 9H70z"/></g><path fill="#a4c9b2" d="M455 0h56l-14 13h-50z"/><g filter="url(#soft)"><path fill="#cd4f48" d="M512 13l6-7 40 4 6 6h-58z"/><path fill="#d98984" d="M530-3h62v16h-20z"/></g></svg></article>
      </section>
    </div>
    <div class="scrollbar"><svg width="7" height="4" viewBox="0 0 7 4"><path fill="#777" d="M0 4l3.500-4L7 4z"/></svg><i></i></div>
  </div>
</main>
</div>

<div class="recorder"><svg width="57" height="39" viewBox="0 0 57 39"><g fill="#fff"><rect x="19.500" y="6" width="5.500" height="21" rx="2"/><rect x="28.500" y="6" width="5.500" height="21" rx="2"/></g><path fill="#6fdc86" d="M10 31h33v2H10z"/><path fill="#444" d="M46 33h7l-3.500 4z"/></svg></div>
</body>
</html>
```

FILE: styles.css
```css
* { box-sizing: border-box; }
body {
  margin: 0;
  width: 1920px;
  height: 1080px;
  overflow: hidden;
  display: flex;
  flex-direction: column;
  font-family: "Open Sans", sans-serif;
  color: #4a4a4a;
}
h2, h3, p { margin: 0; }
i { font-style: normal; }
svg { display: block; flex: none; }
.defs { position: absolute; }

/* top panel */
.panel {
  flex: none;
  height: 24px;
  display: flex;
  align-items: center;
  justify-content: space-between;
  padding: 0 6px 0 6px;
  background: linear-gradient(#5d5a50, #58554c 10%, #3e3d38);
  color: #dfdbd2;
  font: 14.5px/23px "Noto Sans", sans-serif;
}
.panel-title { height: 24px; font-weight: 700; font-size: 14.5px; letter-spacing: -.04px; }
.indicators { display: flex; align-items: center; height: 24px; }
.i-clock { margin-left: 12px; }
.i-net { margin-left: 10px; }
.lang {
  margin-left: 12px;
  width: 20px;
  height: 20px;
  border-radius: 3px;
  background: #dfdbd2;
  color: #45433e;
  font-size: 13px;
  line-height: 20px;
  text-align: center;
}
.i-bt { margin-left: 10px; }
.i-bat { margin-left: 12px; }
.i-vol { margin-left: 11px; }
.clock { margin-left: 12px; width: 69px; height: 24px; letter-spacing: -.25px; }

.desktop { flex: 1; display: flex; min-height: 0; }

/* launcher */
.dock {
  flex: none;
  width: 65px;
  padding: 6px 0 0 6px;
  display: flex;
  flex-direction: column;
  gap: 7px;
  border-right: 1px solid #eceeee;
  background: linear-gradient(#2e302f, rgba(60,62,62,0) 8px), linear-gradient(90deg, #686e70, #7b8284 10%, #7b8284 90%, #6d7375);
}
.tile {
  position: relative;
  flex: none;
  width: 52px;
  height: 52px;
  border-radius: 4px;
  border: 1px solid rgba(190,195,196,.55);
  background: linear-gradient(#a2a7a8, #80868a 45%, #8b9092);
}
.tile svg { margin: -1px; width: 52px; height: 52px; }
.tile.dash { background: linear-gradient(#7f929a, #9aa9ae 50%, #7c8b91); }
.tile.red { background: linear-gradient(#c79298, #933f4c 40%, #94404d); }
.tile.fire { background: linear-gradient(#cf8876, #b94e3c 40%, #bb5240); }
.tile.blue { background: linear-gradient(#7c9ad6, #385fae 40%, #4169bb); }
.tile.pink { background: linear-gradient(#cd6d8c, #c64f70 40%, #c75270); }
.pip {
  position: absolute;
  left: -7px;
  top: 21px;
  border-left: 5px solid #d9dbdb;
  border-top: 4px solid transparent;
  border-bottom: 4px solid transparent;
}
.pip.right { left: auto; right: -7px; border-left: 0; border-right: 5px solid #d9dbdb; }
.pip.double { border: solid #d9dbdb; border-width: 3px 0; width: 4px; height: 8px; }
.pip.triple { left: -6px; top: 15px; border: solid #d9dbdb; border-width: 3px 0; width: 4px; height: 11px; }
.count {
  position: absolute;
  right: 2px;
  top: -2px;
  width: 17px;
  height: 16px;
  border-radius: 8px;
  border: 2px solid #fff;
  background: #55585a;
  color: #fff;
  font: 11px/12px "Noto Sans", sans-serif;
  text-align: center;
}
.folded { position: relative; height: 50px; margin: -5px 0 0 -1px; }
.folded b { position: absolute; left: 14px; top: 4px; color: #fff; font: 700 12px/14px "DejaVu Sans", sans-serif; }

/* browser chrome */
.browser { flex: 1; min-width: 0; display: flex; flex-direction: column; }
.tabs {
  flex: none;
  height: 34px;
  display: flex;
  align-items: center;
  padding-left: 14px;
  background: #3c3b37;
  color: #d5d2ca;
  font: 14.5px/18px "Noto Sans", sans-serif;
}
.tab {
  flex: none;
  display: flex;
  gap: 8px;
  width: 59px;
  height: 20px;
  padding-left: 8px;
  border-right: 1px solid #7a7873;
}
.tab.slim { width: 58px; }
.tab.last { border: 0; }
.tab svg { width: 16px; height: 16px; margin-top: 1px; }
.tab span {
  width: 20px;
  overflow: hidden;
  white-space: nowrap;
  -webkit-mask-image: linear-gradient(90deg, #000 55%, transparent);
  mask-image: linear-gradient(90deg, #000 55%, transparent);
}
.tab-active {
  flex: none;
  width: 59px;
  height: 34px;
  border-radius: 8px 8px 0 0;
  background: #f1f0ee;
  display: flex;
  align-items: center;
  justify-content: space-between;
  padding: 0 11px 0 8px;
}
.newtab { margin-left: 15px; }
.toolbar {
  flex: none;
  height: 36px;
  display: flex;
  align-items: center;
  padding-left: 14px;
  background: #f1f0ee;
}
.nav { display: flex; gap: 16px; width: 94px; }
.omnibox {
  width: 1274px;
  height: 28px;
  border-radius: 14px;
  background: #fff;
  display: flex;
  align-items: center;
  padding: 0 10px 0 13px;
  color: #414141;
  font: 14px/20px "Noto Sans", sans-serif;
}
.omnibox span { margin-left: 11px; }
.star { margin-left: auto; }
.exts { display: flex; margin-left: 6px; }
.ext {
  position: relative;
  width: 32px;
  height: 34px;
  display: flex;
  align-items: center;
  justify-content: center;
}
.ext svg { width: 16px; height: 16px; overflow: visible; }
.ext svg.disc { width: 24px; height: 24px; border-radius: 50%; box-shadow: 0 1px 3px rgba(0,0,0,.5); }
.badge {
  position: absolute;
  right: 3px;
  bottom: 3px;
  height: 13px;
  padding: 0 2px;
  border-radius: 2px;
  color: #fff;
  font: 700 10.5px/13px "Noto Sans", sans-serif;
}
.navy { right: 5px; background: #20466a; }
.grey { background: #5b5b5b; }
.violet { background: #7a05c4; }
.ae { color: #111; font: 700 18px/18px "Open Sans", sans-serif; letter-spacing: -1px; margin-top: -3px; }
.rule { width: 1px; height: 19px; background: #cbcac7; }
.toolbar .rule { margin-left: 7px; }
.avatar { margin-left: 11px; }
.menu { margin-left: 19px; }
.bookmarks {
  flex: none;
  height: 34px;
  display: flex;
  align-items: center;
  padding: 0 14px 4px 14px;
  background: #f1f0ee;
  border-bottom: 1px solid #cfcecb;
  font: 14.400px/20px "Noto Sans", sans-serif;
}
.bookmarks a { flex: none; display: flex; align-items: center; gap: 8px; white-space: nowrap; }
.bookmarks svg { width: 16px; height: 16px; }
.do { width: 16px; color: #f04740; font-size: 14px; font-weight: 600; letter-spacing: -.5px; }
.more { margin-left: 104px; width: 20px; font-weight: 700; }
.bookmarks .other { margin-left: 10px; }

/* page */
.viewport { flex: 1; min-height: 0; display: flex; }
.page { flex: 1; background: #f8fbfc; display: flex; flex-direction: column; overflow: hidden; }
.cats { flex: none; height: 610px; background: #2c8dd1; padding: 40px 330px 0; }
.cats-top { display: flex; justify-content: space-between; height: 86px; }
.find {
  width: 219px;
  height: 46px;
  border: 1px solid #7cc8f6;
  border-radius: 23px;
  background: #3da1e5;
  display: flex;
  align-items: center;
  justify-content: space-between;
  padding: 0 13px 0 20px;
  color: #fff;
  font-size: 13px;
}
.close { display: flex; height: 20px; gap: 2px; align-items: center; padding-right: 12px; color: #82cffb; font-size: 15px; line-height: 20px; }
.close svg { margin-top: -2px; }
.cats-list { position: relative; display: flex; height: 394px; overflow: hidden; }
.col { flex: none; width: 325.5px; color: #7ecdfb; font-size: 13px; line-height: 20px; }
.col h3 { height: 21px; margin-top: 20px; color: #fff; font-size: 14px; line-height: 21px; font-weight: 700; }
.col h3:first-child { margin-top: 0; }
.thumb { position: absolute; right: 0; top: 0; width: 6px; height: 275px; border-radius: 3px; background: #3295da; }
.pager { display: flex; align-items: center; justify-content: center; gap: 15px; padding: 26px 0 0; }
.round { width: 36px; height: 36px; border-radius: 50%; background: #3da1e5; display: flex; align-items: center; justify-content: center; }
.letters { width: 364px; display: flex; justify-content: space-between; color: #82cffb; font-size: 13px; line-height: 20px; }
.sliver {
  flex: none;
  height: 1px;
  margin: 0 824px 0 475px;
  background: linear-gradient(90deg, #f8fbfc, #dfe3ef 30%, #a3acc8 31%, #b9c1d8 39%, #dfe5f2 40%, #dfe5f2 61%, #4a6ab0 63%, #dfe5f2 65%, #dfe5f2 98%, #8aa3cc);
}
.tweets { flex: none; display: flex; align-items: center; justify-content: center; padding-top: 66px; height: 102px; }
h2 { color: #3a3b3f; font-size: 24px; line-height: 36px; font-weight: 400; }
.tweets svg { margin: 0 25px 0 23px; }
.tweets a { color: #2c8dd1; font-size: 22px; line-height: 36px; }
.articles { display: flex; flex-direction: column; align-items: center; padding-top: 97px; }
.date {
  position: relative;
  margin-top: 18px;
  width: 169px;
  height: 35px;
  border: 1px solid #a9c0cf;
  border-radius: 18px;
  background: #f8f9fc;
  color: #a9c0cf;
  font-size: 13px;
  line-height: 34px;
  text-align: center;
}
.date svg { position: absolute; left: 79px; top: -4px; }
.stem { width: 1px; height: 40px; background: #b0bfc9; }
.card { width: 1180px; height: 40px; border-radius: 4px 4px 0 0; background: #fff; overflow: hidden; box-shadow: 0 0 5px rgba(80,100,120,.25); }
.scrollbar { flex: none; width: 15px; background: #f1f1f1; padding: 6px 1px; display: flex; flex-direction: column; align-items: center; gap: 5px; }
.scrollbar i { width: 13px; height: 30px; background: #c1c1c1; }

/* screen recorder control */
.recorder { position: absolute; right: 0; top: 1037px; width: 57px; height: 39px; border-radius: 3px 0 0 3px; background: rgba(110,110,112,.8); box-shadow: inset 0 0 0 1px rgba(190,190,190,.6); }
```
